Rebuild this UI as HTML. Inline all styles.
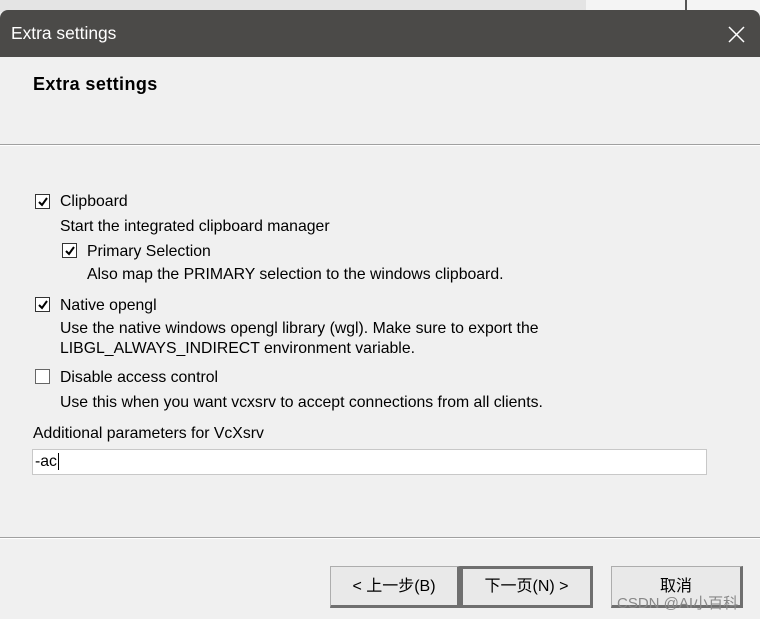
<!DOCTYPE html>
<html><head><meta charset="utf-8"><style>
*{margin:0;padding:0;box-sizing:border-box}
body{width:760px;height:619px;overflow:hidden;background:#f0f0f0;font-family:"Liberation Sans","Noto Sans CJK SC",sans-serif;font-size:15.8px;color:#000;position:relative}
.abs{position:absolute;white-space:nowrap}
.bg{position:absolute;left:0;top:0;width:760px;height:12px;background:#e4e4e4}
.bg2{position:absolute;left:586px;top:0;width:174px;height:12px;background:#f4f4f4}
.vl{position:absolute;left:685px;top:0;width:2px;height:12px;background:#555}
.title{position:absolute;left:0;top:10px;width:760px;height:47px;background:#4b4a48;border-radius:8px 8px 0 0;color:#fff;font-size:17.4px}
.sep{position:absolute;left:0;width:760px;height:2px;border-top:1px solid #a0a0a0;border-bottom:1px solid #fff}
.cb{position:absolute;width:15px;height:15px;border:1px solid #333;background:#fff}
.cb svg{position:absolute;left:1px;top:1px}
.btn{position:absolute;top:566px;height:42px;background:#e9e9e9;border:1px solid #adadad;border-right:3px solid #6f6f6f;border-bottom:3px solid #6f6f6f;text-align:center;line-height:40px;font-size:16px}
</style></head><body>
<div class="bg"></div><div class="bg2"></div><div class="vl"></div>
<div class="title"><span class="abs" style="left:11px;top:13px">Extra settings</span>
<svg class="abs" style="left:728px;top:16px" width="17" height="17"><path d="M1 1L16 16M16 1L1 16" stroke="#fff" stroke-width="1.5"/></svg></div>
<div class="abs" style="left:33px;top:74px;font-weight:bold;font-size:18px;letter-spacing:0.4px">Extra settings</div>
<div class="sep" style="top:144px"></div>

<div class="cb" style="left:35px;top:194px"><svg width="12" height="12"><path d="M2 6L5 9L10 2" stroke="#000" stroke-width="2" fill="none"/></svg></div>
<div class="abs" style="left:60px;top:193px">Clipboard</div>
<div class="abs" style="left:60px;top:218px">Start the integrated clipboard manager</div>
<div class="cb" style="left:62px;top:243px"><svg width="12" height="12"><path d="M2 6L5 9L10 2" stroke="#000" stroke-width="2" fill="none"/></svg></div>
<div class="abs" style="left:87px;top:243px">Primary Selection</div>
<div class="abs" style="left:87px;top:266px">Also map the PRIMARY selection to the windows clipboard.</div>
<div class="cb" style="left:35px;top:297px"><svg width="12" height="12"><path d="M2 6L5 9L10 2" stroke="#000" stroke-width="2" fill="none"/></svg></div>
<div class="abs" style="left:60px;top:297px">Native opengl</div>
<div class="abs" style="left:60px;top:320px">Use the native windows opengl library (wgl). Make sure to export the</div>
<div class="abs" style="left:60px;top:340px">LIBGL_ALWAYS_INDIRECT environment variable.</div>
<div class="cb" style="left:35px;top:369px;border-color:#666"></div>
<div class="abs" style="left:60px;top:369px">Disable access control</div>
<div class="abs" style="left:60px;top:394px">Use this when you want vcxsrv to accept connections from all clients.</div>
<div class="abs" style="left:33px;top:425px">Additional parameters for VcXsrv</div>
<div class="abs" style="left:32px;top:449px;width:675px;height:26px;background:#fff;border:1px solid #c8c8c8;padding:3px 2px">-ac<span style="border-left:1px solid #000;margin-left:1px"></span></div>

<div class="sep" style="top:537px"></div>
<div class="btn" style="left:330px;width:130px">&lt; 上一步(B)</div>
<div class="btn" style="left:460px;width:133px;border:3px solid #6f6f6f;line-height:36px">下一页(N) &gt;</div>
<div class="btn" style="left:611px;width:132px">取消</div>
<div class="abs" style="left:617px;top:592px;font-size:15px;color:#888">CSDN @AI小百科</div>
</body></html>
